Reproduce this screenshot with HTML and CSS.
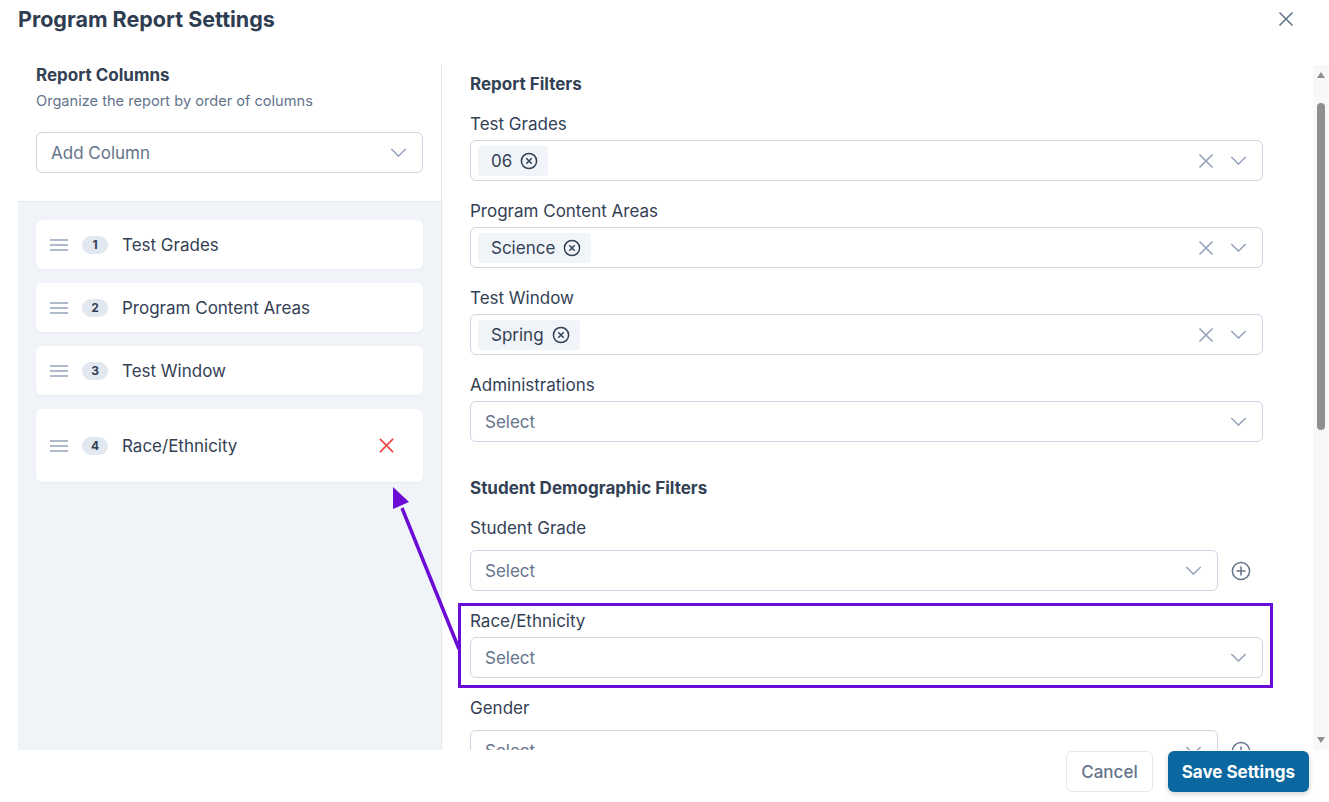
FILE: index.html
```html
<!DOCTYPE html>
<html lang="en">
<head>
<meta charset="UTF-8">
<title>Program Report Settings</title>
<link rel="stylesheet" href="styles.css">
</head>
<body>
<div class="dialog">

  <div class="dialog-header">
    <h1 class="dialog-title">Program Report Settings</h1>
    <button class="close-btn" aria-label="Close">
      <svg viewBox="0 0 16 16" width="16" height="16"><path d="M1.5 1.5l13 13M14.5 1.5l-13 13"/></svg>
    </button>
  </div>

  <div class="dialog-body">

    <!-- left: column order -->
    <div class="columns-panel">
      <div class="columns-head">
        <h2 class="panel-title">Report Columns</h2>
        <p class="panel-sub">Organize the report by order of columns</p>
        <div class="select select-add">
          <span class="placeholder">Add Column</span>
          <svg class="chev" viewBox="0 0 18 10" width="17" height="9"><path d="M1 1l8 8 8-8"/></svg>
        </div>
      </div>

      <div class="columns-list">
        <div class="column-item">
          <svg class="grip" viewBox="0 0 18 12" width="18" height="12"><path d="M0 1h18M0 6h18M0 11h18"/></svg>
          <span class="badge">1</span>
          <span class="item-name">Test Grades</span>
        </div>
        <div class="column-item">
          <svg class="grip" viewBox="0 0 18 12" width="18" height="12"><path d="M0 1h18M0 6h18M0 11h18"/></svg>
          <span class="badge">2</span>
          <span class="item-name">Program Content Areas</span>
        </div>
        <div class="column-item">
          <svg class="grip" viewBox="0 0 18 12" width="18" height="12"><path d="M0 1h18M0 6h18M0 11h18"/></svg>
          <span class="badge">3</span>
          <span class="item-name">Test Window</span>
        </div>
        <div class="column-item removable">
          <svg class="grip" viewBox="0 0 18 12" width="18" height="12"><path d="M0 1h18M0 6h18M0 11h18"/></svg>
          <span class="badge">4</span>
          <span class="item-name">Race/Ethnicity</span>
          <button class="remove-btn" aria-label="Remove">
            <svg viewBox="0 0 16 16" width="16" height="16"><path d="M1 1l14 14M15 1L1 15"/></svg>
          </button>
        </div>
      </div>
    </div>

    <!-- right: filters -->
    <div class="filters-panel">
      <h2 class="section-title">Report Filters</h2>

      <div class="field">
        <label class="field-label">Test Grades</label>
        <div class="select select-tags">
          <span class="chip">06 <svg viewBox="0 0 18 18" width="18" height="18"><circle cx="9" cy="9" r="7.6"/><path d="M6.3 6.3l5.4 5.4M11.7 6.3l-5.4 5.4"/></svg></span>
          <span class="spacer"></span>
          <svg class="clear" viewBox="0 0 16 16" width="16" height="16"><path d="M1.5 1.5l13 13M14.5 1.5l-13 13"/></svg>
          <svg class="chev" viewBox="0 0 18 10" width="17" height="9"><path d="M1 1l8 8 8-8"/></svg>
        </div>
      </div>

      <div class="field">
        <label class="field-label">Program Content Areas</label>
        <div class="select select-tags">
          <span class="chip">Science <svg viewBox="0 0 18 18" width="18" height="18"><circle cx="9" cy="9" r="7.6"/><path d="M6.3 6.3l5.4 5.4M11.7 6.3l-5.4 5.4"/></svg></span>
          <span class="spacer"></span>
          <svg class="clear" viewBox="0 0 16 16" width="16" height="16"><path d="M1.5 1.5l13 13M14.5 1.5l-13 13"/></svg>
          <svg class="chev" viewBox="0 0 18 10" width="17" height="9"><path d="M1 1l8 8 8-8"/></svg>
        </div>
      </div>

      <div class="field">
        <label class="field-label">Test Window</label>
        <div class="select select-tags">
          <span class="chip">Spring <svg viewBox="0 0 18 18" width="18" height="18"><circle cx="9" cy="9" r="7.6"/><path d="M6.3 6.3l5.4 5.4M11.7 6.3l-5.4 5.4"/></svg></span>
          <span class="spacer"></span>
          <svg class="clear" viewBox="0 0 16 16" width="16" height="16"><path d="M1.5 1.5l13 13M14.5 1.5l-13 13"/></svg>
          <svg class="chev" viewBox="0 0 18 10" width="17" height="9"><path d="M1 1l8 8 8-8"/></svg>
        </div>
      </div>

      <div class="field">
        <label class="field-label">Administrations</label>
        <div class="select">
          <span class="placeholder">Select</span>
          <svg class="chev" viewBox="0 0 18 10" width="17" height="9"><path d="M1 1l8 8 8-8"/></svg>
        </div>
      </div>

      <h2 class="section-title section-gap">Student Demographic Filters</h2>

      <div class="field">
        <label class="field-label">Student Grade</label>
        <div class="field-row">
          <div class="select">
            <span class="placeholder">Select</span>
            <svg class="chev" viewBox="0 0 18 10" width="17" height="9"><path d="M1 1l8 8 8-8"/></svg>
          </div>
          <button class="add-btn" aria-label="Add"><svg viewBox="0 0 20 20" width="20" height="20"><circle cx="10" cy="10" r="8.6"/><path d="M10 5.5v9M5.5 10h9"/></svg></button>
        </div>
      </div>

      <div class="field highlight">
        <label class="field-label">Race/Ethnicity</label>
        <div class="select">
          <span class="placeholder">Select</span>
          <svg class="chev" viewBox="0 0 18 10" width="17" height="9"><path d="M1 1l8 8 8-8"/></svg>
        </div>
      </div>

      <div class="field">
        <label class="field-label">Gender</label>
        <div class="field-row">
          <div class="select">
            <span class="placeholder">Select</span>
            <svg class="chev" viewBox="0 0 18 10" width="17" height="9"><path d="M1 1l8 8 8-8"/></svg>
          </div>
          <button class="add-btn" aria-label="Add"><svg viewBox="0 0 20 20" width="20" height="20"><circle cx="10" cy="10" r="8.6"/><path d="M10 5.5v9M5.5 10h9"/></svg></button>
        </div>
      </div>
    </div>

    <div class="scrollbar" aria-hidden="true">
      <span class="scroll-arrow up"></span>
      <span class="scroll-thumb"></span>
      <span class="scroll-arrow down"></span>
    </div>
  </div>

  <div class="dialog-footer">
    <button class="btn btn-cancel">Cancel</button>
    <button class="btn btn-save">Save Settings</button>
  </div>

  <!-- annotation arrow -->
  <svg class="annotation" viewBox="0 0 1329 802" width="1329" height="802">
    <line x1="459" y1="649" x2="402" y2="508"/>
    <polygon points="393,487 409,502 393,509"/>
  </svg>
</div>
</body>
</html>
```

FILE: styles.css
```css
* {
    box-sizing: border-box;
}

html, body {
    margin: 0;
    height: 100%;
}

body {
    font-family: Inter, "Noto Sans", sans-serif;
    color: #334155;
    background: #fff;
    overflow: hidden;
}

button {
    font-family: inherit;
    cursor: pointer;
}

.dialog {
    position: relative;
    height: 802px;
    display: flex;
    flex-direction: column;
}

/* header */
.dialog-header {
    height: 65px;
    flex: none;
    display: flex;
    justify-content: space-between;
    align-items: flex-start;
    padding: 7px 35px 0 18px;
}

.dialog-title {
    margin: 0;
    font-size: 21.5px;
    line-height: 24px;
    font-weight: 700;
    color: #2f3d52;
}

.close-btn {
    margin-top: 4px;
    padding: 0;
    border: 0;
    background: none;
    width: 16px;
    height: 16px;
}

.close-btn svg {
    display: block;
    fill: none;
    stroke: #64748b;
    stroke-width: 1.6;
}

/* body */
.dialog-body {
    height: 685px;
    flex: none;
    display: flex;
}

.columns-panel {
    width: 424px;
    flex: none;
    margin-left: 18px;
    border-right: 1px solid #e5e7eb;
    display: flex;
    flex-direction: column;
}

.columns-head {
    padding: 0 18px 28px;
    border-bottom: 1px solid #e2e8f0;
}

.panel-title {
    margin: 0;
    font-size: 17px;
    line-height: 20px;
    font-weight: 700;
}

.panel-sub {
    margin: 6px 0 0;
    font-size: 14.6px;
    line-height: 20px;
    color: #64748b;
}

.select-add {
    margin-top: 21px;
    padding-right: 16px;
}

.columns-list {
    flex: 1;
    background: #f0f3f8;
    padding: 18px;
    display: flex;
    flex-direction: column;
    gap: 14px;
}

.column-item {
    display: flex;
    align-items: center;
    height: 49px;
    padding: 0 14px;
    background: #fff;
    border-radius: 6px;
    box-shadow: 0 1px 2px rgba(15, 23, 42, 0.04);
}

.column-item.removable {
    height: 73px;
    padding-right: 16px;
}

.grip {
    flex: none;
    fill: none;
    stroke: #94a3b8;
    stroke-width: 1.6;
}

.badge {
    flex: none;
    width: 26px;
    height: 18px;
    margin-left: 14px;
    border-radius: 9px;
    background: #e2e8f0;
    font-size: 12px;
    font-weight: 700;
    display: flex;
    align-items: center;
    justify-content: center;
}

.item-name {
    margin-left: 14px;
    font-size: 17px;
}

.remove-btn {
    margin-left: auto;
    width: 41px;
    height: 41px;
    padding: 0;
    border: 0;
    background: none;
    display: flex;
    align-items: center;
    justify-content: center;
}

.remove-btn svg {
    width: 15px;
    height: 15px;
    fill: none;
    stroke: #ef4444;
    stroke-width: 1.8;
}

/* filters */
.filters-panel {
    flex: 1;
    overflow: hidden;
    padding: 7px 50px 0 28px;
}

.section-title {
    margin: 0 0 16px;
    font-size: 17px;
    line-height: 24px;
    font-weight: 700;
}

.section-gap {
    margin-top: 34px;
}

.field {
    margin-bottom: 18px;
}

.field-label {
    display: block;
    margin-bottom: 4px;
    font-size: 17px;
    line-height: 24px;
}

.field-row {
    display: flex;
    align-items: center;
    margin-top: 10px;
}

.field-row .select {
    flex: 1;
}

.field.highlight {
    position: relative;
}

.field.highlight::after {
    content: "";
    position: absolute;
    top: -6px;
    left: -12px;
    right: -10px;
    bottom: -10px;
    border: 3px solid #6a0bd6;
    pointer-events: none;
}

.select {
    display: flex;
    align-items: center;
    height: 41px;
    padding: 0 15px 0 14px;
    border: 1px solid #cbd5e1;
    border-radius: 6px;
    background: #fff;
}

.select-tags {
    padding-left: 7px;
}

.placeholder {
    flex: 1;
    font-size: 17px;
    color: #64748b;
}

.spacer {
    flex: 1;
}

.chev {
    flex: none;
    fill: none;
    stroke: #94a3b8;
    stroke-width: 1.6;
}

.clear {
    flex: none;
    margin-right: 16px;
    fill: none;
    stroke: #94a3b8;
    stroke-width: 1.6;
}

.chip {
    display: inline-flex;
    align-items: center;
    gap: 8px;
    height: 30px;
    padding: 0 10px 0 13px;
    border-radius: 4px;
    background: #f1f5f9;
    font-size: 17px;
}

.chip svg {
    fill: none;
    stroke: #334155;
    stroke-width: 1.5;
}

.add-btn {
    flex: none;
    width: 45px;
    height: 41px;
    padding: 0;
    border: 0;
    background: none;
    display: flex;
    align-items: center;
    justify-content: center;
}

.add-btn svg {
    fill: none;
    stroke: #64748b;
    stroke-width: 1.5;
}

/* scrollbar of the filter column */
.scrollbar {
    width: 16px;
    flex: none;
    background: #f8f8f8;
    display: flex;
    flex-direction: column;
    align-items: center;
    padding: 7px 0;
}

.scroll-arrow {
    width: 0;
    height: 0;
    border-left: 4.5px solid transparent;
    border-right: 4.5px solid transparent;
}

.scroll-arrow.up {
    border-bottom: 6px solid #8f8f8f;
}

.scroll-arrow.down {
    margin-top: auto;
    border-top: 6px solid #8f8f8f;
}

.scroll-thumb {
    width: 8px;
    height: 327px;
    margin-top: 25px;
    border-radius: 4px;
    background: #8f8f8f;
}

/* footer */
.dialog-footer {
    height: 52px;
    flex: none;
    display: flex;
    justify-content: flex-end;
    gap: 15px;
    padding: 1px 20px 0;
    background: #fff;
}

.btn {
    height: 41px;
    padding: 0 14px;
    border-radius: 6px;
    font-size: 17px;
}

.btn-cancel {
    border: 1px solid #e2e8f0;
    background: #fff;
    color: #64748b;
    font-weight: 500;
}

.btn-save {
    border: 0;
    background: #0a67a0;
    color: #fff;
    font-weight: 700;
    box-shadow: 0 2px 5px rgba(15, 23, 42, 0.2);
}

/* drawn-on annotation */
.annotation {
    position: absolute;
    left: 0;
    top: 0;
    pointer-events: none;
}

.annotation line {
    stroke: #6a0bd6;
    stroke-width: 3.5;
}

.annotation polygon {
    fill: #6a0bd6;
}
```
